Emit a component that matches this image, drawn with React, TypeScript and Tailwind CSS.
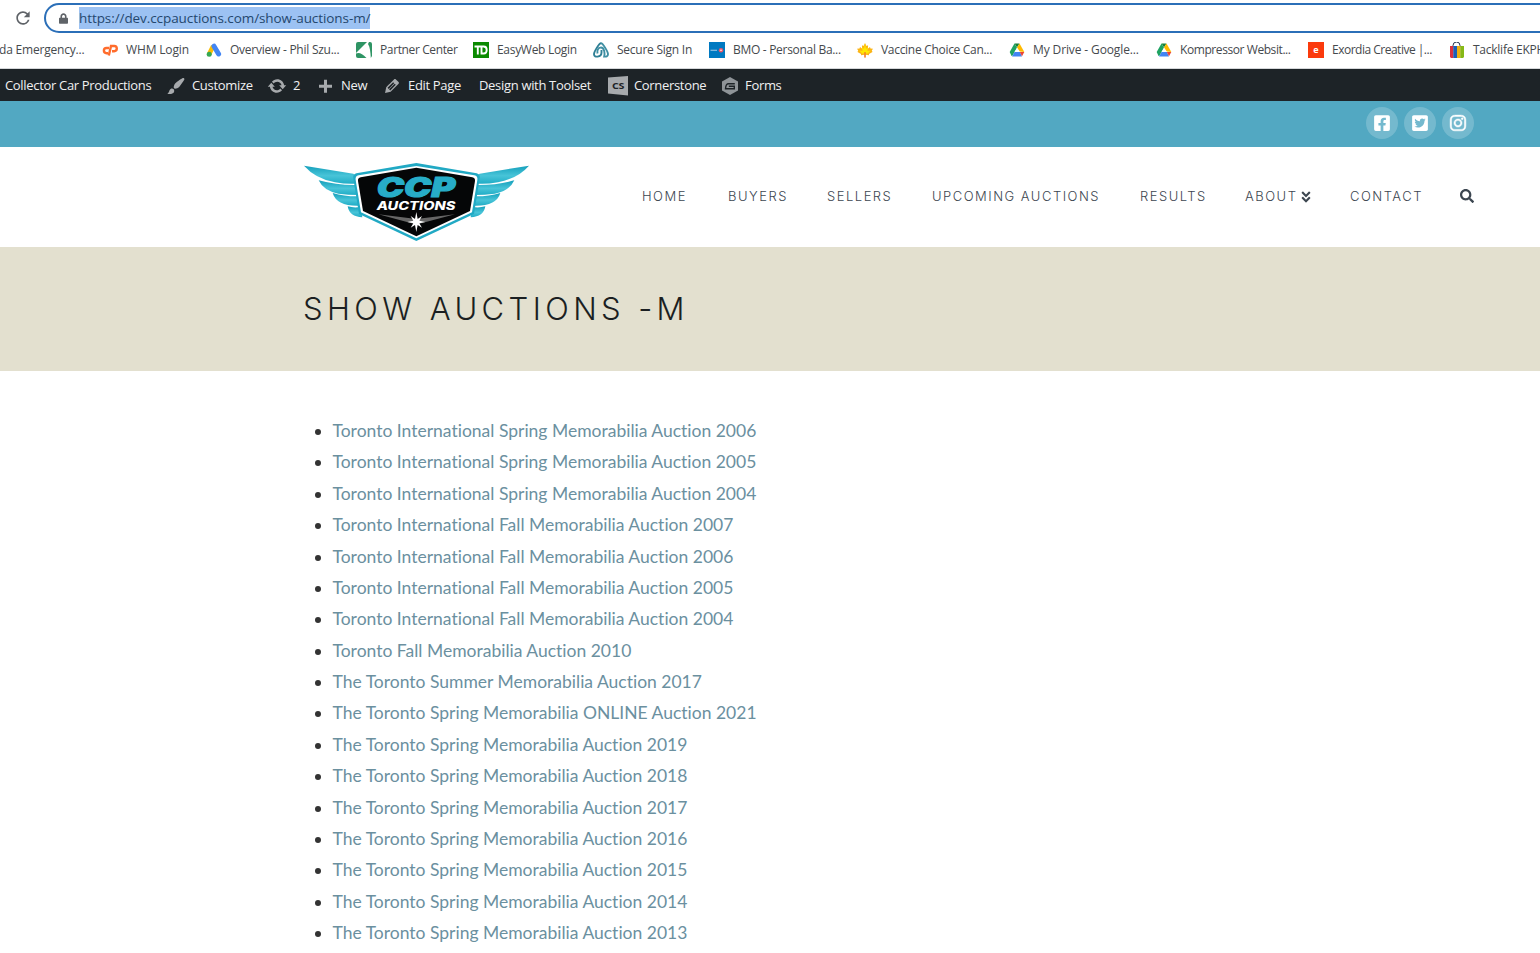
import type { ReactNode } from "react";
import clsx from "clsx";
import {
	FaAngleDoubleDown,
	FaFacebookSquare,
	FaInstagram,
	FaLock,
	FaSearch,
	FaTwitterSquare,
} from "react-icons/fa";
import { MdRefresh } from "react-icons/md";

const auctions = [
	"Toronto International Spring Memorabilia Auction 2006",
	"Toronto International Spring Memorabilia Auction 2005",
	"Toronto International Spring Memorabilia Auction 2004",
	"Toronto International Fall Memorabilia Auction 2007",
	"Toronto International Fall Memorabilia Auction 2006",
	"Toronto International Fall Memorabilia Auction 2005",
	"Toronto International Fall Memorabilia Auction 2004",
	"Toronto Fall Memorabilia Auction 2010",
	"The Toronto Summer Memorabilia Auction 2017",
	"The Toronto Spring Memorabilia ONLINE Auction 2021",
	"The Toronto Spring Memorabilia Auction 2019",
	"The Toronto Spring Memorabilia Auction 2018",
	"The Toronto Spring Memorabilia Auction 2017",
	"The Toronto Spring Memorabilia Auction 2016",
	"The Toronto Spring Memorabilia Auction 2015",
	"The Toronto Spring Memorabilia Auction 2014",
	"The Toronto Spring Memorabilia Auction 2013",
];

function CpanelIcon() {
	return (
		<svg viewBox="0 0 16 16" className="size-4" fill="none" stroke="#ff6c2c" strokeWidth="2.4">
			<path d="M7 6H4.500a2.600 2.600 0 0 0 0 5.200H6" />
			<path d="M6.800 13.500 9 4h3.200a2.500 2.500 0 0 1 0 5.200H10" />
		</svg>
	);
}

function AdsIcon() {
	return (
		<svg viewBox="0 0 16 16" className="size-4">
			<path d="M7.2 4 3.2 12" stroke="#fbbc04" strokeWidth="4.6" />
			<path d="M8 4.2 12.6 12" stroke="#4285f4" strokeWidth="5" strokeLinecap="round" />
			<circle cx="3.2" cy="12.2" r="2.5" fill="#34a853" />
		</svg>
	);
}

function PartnerIcon() {
	return (
		<svg viewBox="0 0 16 16" className="size-4">
			<path d="M2 0h9L0 11V2a2 2 0 0 1 2-2z" fill="#2e9464" />
			<path d="M0 11.500c3-1.500 6 0 10.500 4.500H2a2 2 0 0 1-2-2z" fill="#2e9464" />
			<path d="M13 0h1a2 2 0 0 1 2 2v12l-1.2 2C14.500 10 14 5 12 2z" fill="#2e9464" />
		</svg>
	);
}

function TdIcon() {
	return (
		<svg viewBox="0 0 16 16" className="size-4">
			<path d="M0 0h16v16H0z" fill="#0a8a00" />
			<path d="M1.500 4.500H8M4.800 4.500V12.500M8.500 4.500h2.200q3 0 3 3.500t-3 3.500H8.500z" stroke="#fff" strokeWidth="1.9" fill="none" />
		</svg>
	);
}

function SecureIcon() {
	return (
		<svg viewBox="0 0 16 16" className="size-4" fill="none">
			<path d="M8 1.200C6 1.200 1 10 1 12.200s2 2.600 3.600 2.400C6.500 14.300 8.500 13 8.500 10.500V8" stroke="#2f7f95" strokeWidth="1.900" />
			<path d="M8 1.200c2 0 7 8.800 7 11s-2 2.600-3.800 2.400C12 12 11.500 5.500 8 5.500S4 9 4.500 11.500" stroke="#3f8fa3" strokeWidth="1.900" />
		</svg>
	);
}

function BmoIcon() {
	return (
		<svg viewBox="0 0 16 16" className="size-4">
			<path d="M0 0h16v16H0z" fill="#0079c1" />
			<path d="M1.500 8.300h6.500" stroke="#8fc0e2" strokeWidth="1.200" />
			<circle cx="12" cy="8.300" r="2.200" fill="#ed5567" />
			<circle cx="12" cy="8.300" r=".8" fill="#fff" />
		</svg>
	);
}

function MapleIcon() {
	return (
		<svg viewBox="0 0 16 16" className="size-4">
			<path
				d="M8 1 9.500 4 11 3.200 11 6.500 13 5 13.500 6.500 16 6.800 14.800 8.600 15.500 10 12 12 12 13.200 8.600 12.700V15.500H7.400V12.700L4 13.200 4 12 .5 10 1.200 8.600 0 6.800 2.500 6.500 3 5 5 6.500 5 3.200 6.500 4z"
				fill="#fbb416"
			/>
			<path d="M8 1.500 9 7l2-2-.5 4 3-.5-2.500 3H5l-2.500-3 3 .5L5 5l2 2z" fill="#ffe800" />
			<path d="M8 10v5.500" stroke="#f05a28" strokeWidth="1" />
		</svg>
	);
}

function DriveIcon() {
	return (
		<svg viewBox="0 0 16 16" className="size-4">
			<path d="M5.500 1.500h5L8 5.500z" fill="#188038" />
			<path d="M5.500 1.500 8 5.700 3.600 13.500 2.500 14 .7 10z" fill="#1ea362" />
			<path d="M10.500 1.500 15.300 10l-4.600-.4L8 5.600z" fill="#ffba00" />
			<path d="M5.600 10H11l2 4.500H3z" fill="#4285f4" />
			<path d="M10.800 10h4.500L13 14.300z" fill="#ea4335" />
			<path d="M8 5.700 10.600 10H5.500z" fill="#fff" />
		</svg>
	);
}

function ExordiaIcon() {
	return (
		<span className="flex size-4 items-center justify-center bg-[#fb3a0c] pb-px text-[9px] font-bold text-white">
			e
		</span>
	);
}

function BagIcon() {
	return (
		<svg viewBox="0 0 16 16" className="size-4">
			<path d="M4 5V3.500a3.500 3.500 0 0 1 7 0V5" stroke="#26344f" strokeWidth="1" fill="none" />
			<path d="M1 4h3.500v12H2L1 15z" fill="#d8323f" />
			<path d="M4.300 4H8v12H4.300z" fill="#1a5fb8" />
			<path d="M8 4h3.500v12H8z" fill="#ecb010" />
			<path d="M11.300 4H15v11l-1 1h-2.700z" fill="#86b817" />
		</svg>
	);
}

interface Bookmark {
	label: string;
	icon: ReactNode;
	width: string;
	tracking?: string;
}

const bookmarks: Bookmark[] = [
	{ label: "WHM Login", icon: <CpanelIcon />, width: "w-[104px]", tracking: "tracking-[-0.15px]" },
	{ label: "Overview - Phil Szu...", icon: <AdsIcon />, width: "w-[150px]" },
	{ label: "Partner Center", icon: <PartnerIcon />, width: "w-[117px]", tracking: "tracking-[-0.38px]" },
	{ label: "EasyWeb Login", icon: <TdIcon />, width: "w-[120px]", tracking: "tracking-[-0.3px]" },
	{ label: "Secure Sign In", icon: <SecureIcon />, width: "w-[116px]" },
	{ label: "BMO - Personal Ba...", icon: <BmoIcon />, width: "w-[148px]", tracking: "tracking-[-0.3px]" },
	{ label: "Vaccine Choice Can...", icon: <MapleIcon />, width: "w-[152px]", tracking: "tracking-[-0.3px]" },
	{ label: "My Drive - Google...", icon: <DriveIcon />, width: "w-[147px]", tracking: "tracking-[-0.12px]" },
	{ label: "Kompressor Websit...", icon: <DriveIcon />, width: "w-[152px]", tracking: "tracking-[-0.42px]" },
	{ label: "Exordia Creative |...", icon: <ExordiaIcon />, width: "w-[141px]", tracking: "tracking-[-0.5px]" },
	{ label: "Tacklife EKPH", icon: <BagIcon />, width: "w-[110px]" },
];

function BrowserChrome() {
	return (
		<div className="h-[69px] overflow-hidden border-b border-[#d5d7da] bg-white font-['Open_Sans',sans-serif]">
			<div className="flex h-9 items-start pl-[13px] pt-[3px]">
				<MdRefresh className="mt-[5px] size-5 shrink-0 text-[#5f6368]" />
				<div className="-mr-6 ml-[11px] flex h-[30px] flex-1 items-center rounded-l-full border-2 border-[#2b6fb8] pl-[13px]">
					<FaLock className="h-[11px] w-[9px] text-[#5f6368]" />
					<span className="ml-[11px] h-[22px] bg-[#9cc2f3] text-[13.5px] leading-[22px] tracking-[-0.08px] text-[#24476e]">
						https://dev.ccpauctions.com/show-auctions-m/
					</span>
				</div>
			</div>
			<div className="flex h-7 items-center text-[12px] whitespace-nowrap text-[#45494d]">
				<span className="flex w-[102px] shrink-0 tracking-[-0.2px]">
					<span className="-ml-px">da Emergency...</span>
				</span>
				{bookmarks.map(({ label, icon, width, tracking }) => (
					<span key={label} className={clsx("flex shrink-0 items-center gap-2", width)}>
						{icon}
						<span className={tracking ?? "tracking-[-0.25px]"}>{label}</span>
					</span>
				))}
			</div>
		</div>
	);
}

function Dashicon({ d }: { d: string }) {
	return (
		<svg viewBox="0 0 20 20" className="size-5 fill-[#a7aaad]">
			<path d={d} />
		</svg>
	);
}

const brush =
	"M18.33 3.57s.27-.8-.31-1.36c-.53-.52-1.22-.24-1.22-.24-.61.3-5.76 3.47-7.67 5.57-.86.96-2.06 3.79-1.09 4.82.92.98 3.96-.17 4.79-1 2.06-2.06 5.21-7.17 5.5-7.79zM1.4 17.65c2.37-1.56 1.46-3.41 3.23-4.64.93-.65 2.22-.62 3.08.29.63.67.8 2.57-.16 3.46-1.57 1.45-4 1.55-6.15.89z";
const update =
	"M10.2 3.28c3.53 0 6.43 2.61 6.92 6h2.08l-3.5 4-3.5-4h2.32c-.45-1.97-2.21-3.45-4.32-3.45-1.45 0-2.73.71-3.54 1.78L4.95 5.66C6.23 4.2 8.11 3.28 10.2 3.28zm-.4 13.44c-3.52 0-6.43-2.61-6.92-6H.8l3.5-4c1.17 1.33 2.33 2.67 3.5 4H5.48c.45 1.97 2.21 3.45 4.32 3.45 1.45 0 2.73-.71 3.54-1.78l1.71 1.95C13.77 15.8 11.89 16.72 9.8 16.72z";
const plus = "M16 8.800v3h-5v5H8v-5H3v-3h5v-5h3v5h5z";
const pencil =
	"M13.89 3.39l2.71 2.72c.46.46.42 1.24.03 1.64l-8.01 8.02-5.56 1.16 1.16-5.58s7.6-7.63 7.99-8.03c.39-.39 1.22-.39 1.68.07zm-2.73 2.79l-5.59 5.61 1.11 1.11 5.54-5.65zm-2.97 8.23l5.58-5.6-1.07-1.08-5.59 5.6z";

function AdminBar() {
	return (
		<div className="flex h-8 items-center bg-[#1d2327] pt-px pl-[5px] font-['Open_Sans',sans-serif] text-[13px] tracking-[-0.32px] whitespace-nowrap text-[#f0f0f1]">
			<span className="w-[161px]">Collector Car Productions</span>
			<span className="flex w-[101px] items-center gap-[6px]">
				<Dashicon d={brush} />
				Customize
			</span>
			<span className="flex w-[49px] items-center gap-[6px]">
				<Dashicon d={update} />2
			</span>
			<span className="flex w-[66px] items-center gap-[5px]">
				<Dashicon d={plus} />
				New
			</span>
			<span className="flex w-[97px] items-center gap-[6px]">
				<Dashicon d={pencil} />
				Edit Page
			</span>
			<span className="w-[129px]">Design with Toolset</span>
			<span className="flex w-[114px] items-center gap-[6px]">
				<svg viewBox="0 0 20 20" className="size-5">
					<path d="M0 1.500 20 0v19.500L0 17.500z" fill="#a7aaad" />
					<text
						x="10"
						y="12.800"
						textAnchor="middle"
						fontSize="9"
						fontWeight="700"
						fill="#1d2327"
						textLength="12"
						lengthAdjust="spacingAndGlyphs"
					>
						CS
					</text>
				</svg>
				Cornerstone
			</span>
			<span className="flex items-center gap-[7px]">
				<svg viewBox="0 0 16 18" className="h-[18px] w-4">
					<path d="M8 0 16 4.500v9L8 18 0 13.500v-9z" fill="#8f9498" />
					<path d="M12.800 6.800H6.500Q3.800 6.800 3.500 11.700h8.800V9.200H6.800" stroke="#1d2327" strokeWidth="1.400" fill="none" />
				</svg>
				Forms
			</span>
		</div>
	);
}

function SocialBar() {
	return (
		<div className="flex h-[46px] items-center justify-end gap-1.5 bg-[#52a8c2] pr-[66px] pb-0.5 text-lg text-white">
			<a className="flex size-8 items-center justify-center rounded-full bg-white/20">
				<FaFacebookSquare />
			</a>
			<a className="flex size-8 items-center justify-center rounded-full bg-white/20">
				<FaTwitterSquare />
			</a>
			<a className="flex size-8 items-center justify-center rounded-full bg-white/20">
				<FaInstagram stroke="currentColor" strokeWidth="14" />
			</a>
		</div>
	);
}

function Logo() {
	return (
		<svg viewBox="42 36 678 240" className="h-20 w-[226px]">
			<defs>
				<linearGradient id="wing" x1="0" y1="0" x2="0" y2="1">
					<stop offset="0" stopColor="#149fbb" />
					<stop offset=".55" stopColor="#48c4d8" />
					<stop offset="1" stopColor="#20acc6" />
				</linearGradient>
				<g id="half-wing" fill="url(#wing)">
					<path d="M42 47 190 71Q199 73 196 101 170 103 135 97 75 85 42 47z" />
					<path d="M86 91Q140 106 200 105L206 135Q175 135 145 131 100 122 86 91z" />
					<path d="M128 129Q165 140 207 139L211 167Q140 170 128 129z" />
					<path d="M173 169Q190 174 212 171L217 202Q178 200 173 169z" />
				</g>
			</defs>
			<use href="#half-wing" />
			<use href="#half-wing" transform="matrix(-1 0 0 1 759 0)" />
			<path d="M379 39 560 70Q571 73 569 85L552 192 379 273 207 192 190 85Q188 73 199 70z" fill="#21a9c4" />
			<path d="M379 48 553 76Q564 78 562 90L546 187 379 265 213 187 197 90Q195 78 206 76z" fill="#fff" />
			<path d="M379 53 547 82Q556 84 555 93L540 183 379 259 219 183 204 93Q203 84 212 82z" fill="#050607" />
			<text
				x="260"
				y="142"
				fontFamily="Inter, sans-serif"
				fontSize="80"
				fontWeight="900"
				fontStyle="italic"
				fill="#27adc8"
				stroke="#27adc8"
				strokeWidth="3"
				textLength="236"
				lengthAdjust="spacingAndGlyphs"
			>
				CCP
			</text>
			<text
				x="260"
				y="180"
				fontFamily="Inter, sans-serif"
				fontSize="34"
				fontWeight="800"
				fontStyle="italic"
				fill="#fff"
				textLength="236"
				lengthAdjust="spacingAndGlyphs"
			>
				AUCTIONS
			</text>
			<path d="M265 193 379 207 495 193 385 222H373z" fill="#666" />
			<path
				d="M379 186 383 207 396 198 388 212 406 216 388 220 396 233 383 225 379 246 375 225 362 233 370 220 352 216 370 212 362 198 375 207z"
				fill="#fff"
			/>
		</svg>
	);
}

const navItems = [
	{ label: "HOME", width: "w-[86px]" },
	{ label: "BUYERS", width: "w-[99px]" },
	{ label: "SELLERS", width: "w-[105px]" },
	{ label: "UPCOMING AUCTIONS", width: "w-[208px]" },
	{ label: "RESULTS", width: "w-[105px]" },
	{ label: "ABOUT", width: "w-[105px]", arrow: true },
	{ label: "CONTACT", width: "w-[110px]" },
];

function Header() {
	return (
		<header className="flex h-[100px] items-center justify-between bg-white pr-[66px] pl-[304px]">
			<div className="pt-[9px]">
				<Logo />
			</div>
			<nav className="flex items-center font-['Inter',sans-serif] text-[13px] font-light tracking-[1.5px] text-[#3c4650]">
				{navItems.map(({ label, width, arrow }) => (
					<a key={label} className={clsx("flex items-center whitespace-nowrap", width)}>
						{label}
						{arrow && <FaAngleDoubleDown className="mb-px ml-[2px] size-[14px]" />}
					</a>
				))}
				<FaSearch className="mb-0.5 size-[14px]" />
			</nav>
		</header>
	);
}

export default function App() {
	return (
		<div className="h-[953px] w-[1540px] overflow-hidden bg-white">
			<BrowserChrome />
			<AdminBar />
			<SocialBar />
			<Header />
			<div className="flex h-[124px] items-center bg-[#e3e0cf] pl-[303px]">
				<h1 className="font-['Inter',sans-serif] text-[31px] font-light tracking-[4.4px] text-[#1b1f22]">
					SHOW AUCTIONS -M
				</h1>
			</div>
			<ul className="list-disc pt-11 pl-[332.5px] font-['Lato',sans-serif] text-[17.5px] leading-[31.38px] text-[#333] [font-variant-ligatures:none]">
				{auctions.map((title) => (
					<li key={title}>
						<a className="text-[#6b909f]">{title}</a>
					</li>
				))}
			</ul>
		</div>
	);
}
